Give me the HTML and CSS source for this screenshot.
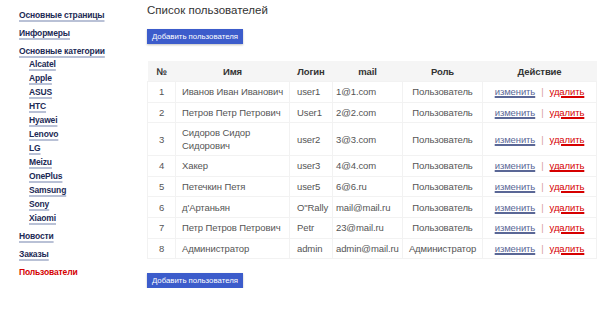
FILE: index.html
```html
<!DOCTYPE html>
<html lang="ru">
<head>
  <meta charset="UTF-8">
  <title>Список пользователей</title>
  <link rel="stylesheet" href="styles.css">
</head>
<body>
  <div class="page">
    <!-- Меню -->
    <div class="sidebar">
      <a class="menu-link" href="#">Основные страницы</a>
      <a class="menu-link" href="#">Информеры</a>
      <a class="menu-link" href="#">Основные категории</a>
      <div class="submenu">
        <a href="#">Alcatel</a>
        <a href="#">Apple</a>
        <a href="#">ASUS</a>
        <a href="#">HTC</a>
        <a href="#">Hyawei</a>
        <a href="#">Lenovo</a>
        <a href="#">LG</a>
        <a href="#">Meizu</a>
        <a href="#">OnePlus</a>
        <a href="#">Samsung</a>
        <a href="#">Sony</a>
        <a href="#">Xiaomi</a>
      </div>
      <a class="menu-link" href="#">Новости</a>
      <a class="menu-link" href="#">Заказы</a>
      <a class="menu-link active" href="#">Пользователи</a>
    </div>

    <div class="content">
      <h1 class="title">Список пользователей</h1>
      <button class="btn">Добавить пользователя</button>

      <table class="users">
        <colgroup>
          <col class="c-num">
          <col class="c-name">
          <col class="c-login">
          <col class="c-mail">
          <col class="c-role">
          <col class="c-act">
        </colgroup>
        <thead>
          <tr>
            <th>№</th>
            <th>Имя</th>
            <th>Логин</th>
            <th>mail</th>
            <th>Роль</th>
            <th>Действие</th>
          </tr>
        </thead>
        <tbody>
          <tr><td class="num">1</td><td class="name">Иванов Иван Иванович</td><td class="login">user1</td><td class="mail">1@1.com</td><td class="role">Пользователь</td><td class="act"><a class="edit" href="#">изменить</a><span class="sep">|</span><a class="del" href="#">удалить</a></td></tr>
          <tr><td class="num">2</td><td class="name">Петров Петр Петрович</td><td class="login">User1</td><td class="mail">2@2.com</td><td class="role">Пользователь</td><td class="act"><a class="edit" href="#">изменить</a><span class="sep">|</span><a class="del" href="#">удалить</a></td></tr>
          <tr class="tall"><td class="num">3</td><td class="name">Сидоров Сидор<br>Сидорович</td><td class="login">user2</td><td class="mail">3@3.com</td><td class="role">Пользователь</td><td class="act"><a class="edit" href="#">изменить</a><span class="sep">|</span><a class="del" href="#">удалить</a></td></tr>
          <tr><td class="num">4</td><td class="name">Хакер</td><td class="login">user3</td><td class="mail">4@4.com</td><td class="role">Пользователь</td><td class="act"><a class="edit" href="#">изменить</a><span class="sep">|</span><a class="del" href="#">удалить</a></td></tr>
          <tr><td class="num">5</td><td class="name">Петечкин Петя</td><td class="login">user5</td><td class="mail">6@6.ru</td><td class="role">Пользователь</td><td class="act"><a class="edit" href="#">изменить</a><span class="sep">|</span><a class="del" href="#">удалить</a></td></tr>
          <tr><td class="num">6</td><td class="name">д'Артаньян</td><td class="login">O"Rally</td><td class="mail">mail@mail.ru</td><td class="role">Пользователь</td><td class="act"><a class="edit" href="#">изменить</a><span class="sep">|</span><a class="del" href="#">удалить</a></td></tr>
          <tr><td class="num">7</td><td class="name">Петр Петров Петрович</td><td class="login">Petr</td><td class="mail">23@mail.ru</td><td class="role">Пользователь</td><td class="act"><a class="edit" href="#">изменить</a><span class="sep">|</span><a class="del" href="#">удалить</a></td></tr>
          <tr><td class="num">8</td><td class="name">Администратор</td><td class="login">admin</td><td class="mail">admin@mail.ru</td><td class="role">Администратор</td><td class="act"><a class="edit" href="#">изменить</a><span class="sep">|</span><a class="del" href="#">удалить</a></td></tr>
        </tbody>
      </table>

      <button class="btn">Добавить пользователя</button>
    </div>
  </div>
</body>
</html>
```
FILE: styles.css
```css
body {
  margin: 0;
  padding: 0;
  background-color: white;
  font-family: 'Liberation Sans', Arial, sans-serif;
  color: #444;
}
.page {
  display: flex;
}
.sidebar {
  width: 147px;
  flex-shrink: 0;
  padding: 6px 0 0 19px;
  box-sizing: border-box;
  display: flex;
  flex-direction: column;
  align-items: flex-start;
}
.sidebar a {
  color: #1c2a55;
  font-weight: bold;
  font-size: 8.5px;
  letter-spacing: -0.15px;
  text-decoration: underline;
  text-decoration-color: #b9c1d6;
  text-decoration-thickness: 2px;
  text-underline-offset: 2px;
}
.menu-link {
  line-height: 18px;
}
.menu-link.active {
  color: #d40000;
  text-decoration: none;
}
.submenu {
  display: flex;
  flex-direction: column;
  align-items: flex-start;
  padding-left: 10px;
  margin: -3px 0 2px;
}
.submenu a {
  line-height: 14px;
}
.content {
  padding-top: 3px;
  width: 450px;
}
.title {
  font-size: 11.5px;
  font-weight: normal;
  color: #333;
  margin: 0 0 12px 0;
  line-height: 14px;
}
.btn {
  display: block;
  background-color: #3c5ccb;
  color: white;
  border: none;
  font-family: 'Liberation Sans', Arial, sans-serif;
  font-size: 7.8px;
  height: 15px;
  width: 96px;
  padding: 0;
  box-shadow: 0 1px 2px rgba(0, 0, 0, 0.25);
}
.users {
  border-collapse: collapse;
  table-layout: fixed;
  width: 449px;
  margin: 17px 0 14px 0;
  font-size: 9.5px;
  letter-spacing: -0.1px;
  color: #555;
}
.c-num { width: 28px; }
.c-name { width: 114px; }
.c-login { width: 43px; }
.c-mail { width: 70px; }
.c-role { width: 80px; }
.c-act { width: 114px; }
.users th {
  background-color: #f5f5f5;
  color: #333;
  font-weight: bold;
  height: 20px;
  padding: 0;
  text-align: center;
}
.users td {
  height: 19.6px;
  padding: 0;
  border: 1px solid #f2f2f2;
  white-space: nowrap;
  overflow: hidden;
}
.users tr.tall td {
  height: 32px;
}
.users td.name {
  line-height: 13px;
  padding-left: 6px;
}
.users td.login {
  padding-left: 7px;
}
.users td.mail {
  padding-left: 3px;
}
.users td.num, .users td.role, .users td.act {
  text-align: center;
}
.act a {
  text-decoration: underline;
  text-decoration-thickness: 2px;
  text-underline-offset: 1px;
}
.edit {
  color: #5a6796;
  text-decoration-color: #c3c9dd;
}
.del {
  color: #d60000;
  text-decoration-color: #f1a9a9;
}
.sep {
  color: #d8a0a0;
  margin: 0 6px;
}
```
